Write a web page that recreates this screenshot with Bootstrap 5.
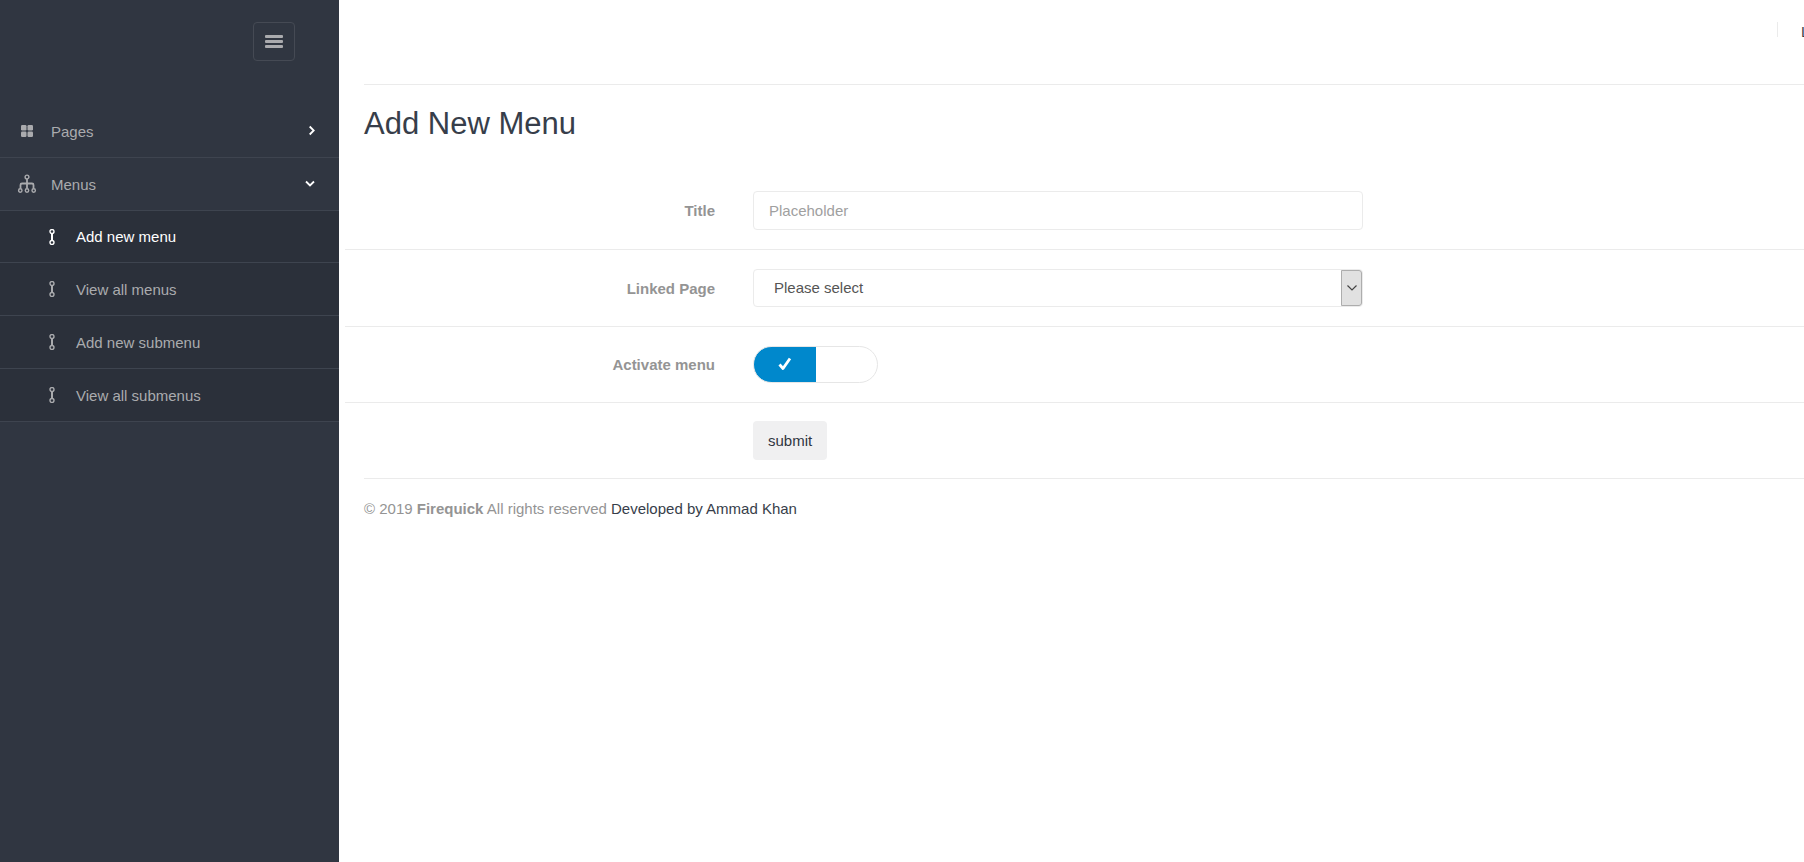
<!DOCTYPE html>
<html lang="en">
<head>
<meta charset="utf-8">
<meta name="viewport" content="width=device-width, initial-scale=1">
<title>Add New Menu</title>
<link href="https://cdn.jsdelivr.net/npm/bootstrap@5.3.0/dist/css/bootstrap.min.css" rel="stylesheet">
<style>
  body { font: 15px/21px "Liberation Sans", Arial, sans-serif; color: #949494; background: #fff; overflow-x: hidden; }
  a { color: #373e4a; text-decoration: none; }

  .side { width: 339px; background: #303641; }
  .side-head { height: 105px; padding: 22px 44px 0 0; }
  .collapse-btn { width: 42px; height: 39px; padding: 0; border: 1px solid #454a54; border-radius: 4px; background: none; color: #aaabae; line-height: 0; }
  .side ul a { height: 53px; color: #aaabae; border-bottom: 1px solid #3e444f; }
  .side ul a:hover, .side ul a.current { color: #fff; }
  .top-link { padding: 0 24px 0 17px; }
  .top-link svg:first-child { width: 20px; margin-right: 14px; }
  .arrow { color: #fff; }
  .sub { background: #2b303a; }
  .sub a { padding: 0 24px 0 46px; }
  .side .sub li:first-child a { height: 52px; }
  .sub svg { margin-right: 17px; }

  .content-area { padding-left: 25px; margin-right: -78px; }
  .page-head { height: 85px; padding: 21px 17px 0 0; border-bottom: 1px solid #ebebeb; }
  .page-head a { width: 64px; }
  .divider { width: 1px; height: 15px; margin: 1px 23px 0 0; background: #ebebeb; }
  h1 { font-size: 31px; line-height: 34px; font-weight: 400; color: #373e4a; margin: 22px 0 31px; }

  .form-line { --bs-gutter-x: 38px; padding: 19px 0; border-bottom: 1px solid #ebebeb; }
  .form-line:last-child { padding: 18px 0; border-bottom: 0; }
  .form-line label { font-weight: 700; }
  .form-control, .form-select { height: 39px; font-size: 15px; line-height: 21px; color: #555; border-color: #ebebeb; border-radius: 4px; padding: 0 15px; }
  .form-control::placeholder { color: #a0a0a0; }
  .form-select { height: 38px; padding: 0 30px 2px 20px; background-image: none; }
  .select-cap { top: 1px; right: 1px; bottom: 1px; width: 21px; background: #e1e1e1; border: 1px solid #adadad; border-radius: 0 3px 3px 0; pointer-events: none; color: #444; }
  .toggle { width: 125px; height: 37px; }
  .toggle input { appearance: none; width: 100%; height: 100%; margin: 0; border: 1px solid #e6e6e6; border-radius: 19px; background: #fff; }
  .toggle input:checked { background: linear-gradient(90deg, #0088cc 50%, #fff 50%); }
  .toggle svg { top: 11px; left: 25px; pointer-events: none; }
  .btn-submit { height: 39px; padding: 0 15px; font-size: 15px; color: #303641; background: #f0f0f1; border: 0; border-radius: 4px; }
  footer { border-top: 1px solid #ebebeb; padding: 19px 0; }
</style>
</head>
<body>
<svg class="d-none" aria-hidden="true">
  <symbol id="flow" viewBox="0 0 6 16">
    <g fill="none" stroke="currentColor" stroke-width="1.4"><circle cx="3" cy="2.5" r="2"/><circle cx="3" cy="13.5" r="2"/></g>
    <path d="M3 4.3v7.4" stroke="currentColor" stroke-width="2"/>
  </symbol>
</svg>
<div class="d-flex min-vh-100">
  <aside class="side flex-shrink-0">
    <div class="side-head d-flex justify-content-end align-items-start">
      <button class="collapse-btn" type="button" aria-label="Toggle sidebar">
        <svg width="18" height="14" viewBox="0 0 18 14" fill="currentColor"><rect y="0" width="18" height="3" rx="1"/><rect y="5" width="18" height="3" rx="1"/><rect y="10" width="18" height="3" rx="1"/></svg>
      </button>
    </div>
    <ul class="list-unstyled mb-0">
      <li>
        <a class="top-link d-flex align-items-center" href="#">
          <svg height="12" viewBox="0 0 20 12" fill="currentColor"><rect x="4" width="5.500" height="5.500" rx="1.200"/><rect x="10.500" width="5.500" height="5.500" rx="1.200"/><rect x="4" y="6.500" width="5.500" height="5.500" rx="1.200"/><rect x="10.500" y="6.500" width="5.500" height="5.500" rx="1.200"/></svg>
          <span class="flex-grow-1">Pages</span>
          <svg class="arrow" width="6" height="12" viewBox="0 0 6 12" fill="none" stroke="currentColor" stroke-width="1.800"><path d="M.7 1.500 4.700 5.500 .7 9.500"/></svg>
        </a>
      </li>
      <li>
        <a class="top-link d-flex align-items-center" href="#">
          <svg height="20" viewBox="0 0 20 20" fill="none" stroke="currentColor" stroke-width="1.400"><circle cx="10" cy="3" r="1.900"/><circle cx="3.300" cy="16.500" r="1.700"/><circle cx="10" cy="16.500" r="1.700"/><circle cx="16.700" cy="16.500" r="1.700"/><path d="M10 5v9.500M3.500 14.500v-3.500q0-1.500 1.500-1.500h10q1.500 0 1.500 1.500v3.500" stroke-width="1.800"/></svg>
          <span class="flex-grow-1">Menus</span>
          <svg class="arrow" width="10" height="8" viewBox="0 0 10 8" fill="none" stroke="currentColor" stroke-width="1.800"><path d="M1 1.500 5 5.500 9 1.500"/></svg>
        </a>
        <ul class="sub list-unstyled">
          <li><a class="current d-flex align-items-center" href="#"><svg width="13" height="16"><use href="#flow" width="12"/></svg>Add new menu</a></li>
          <li><a class="d-flex align-items-center" href="#"><svg width="13" height="16"><use href="#flow" width="12"/></svg>View all menus</a></li>
          <li><a class="d-flex align-items-center" href="#"><svg width="13" height="16"><use href="#flow" width="12"/></svg>Add new submenu</a></li>
          <li><a class="d-flex align-items-center" href="#"><svg width="13" height="16"><use href="#flow" width="12"/></svg>View all submenus</a></li>
        </ul>
      </li>
    </ul>
  </aside>

  <main class="content-area flex-grow-1">
    <div class="page-head d-flex justify-content-end">
      <span class="divider"></span>
      <a class="text-nowrap" href="#">Log Out</a>
    </div>
    <h1>Add New Menu</h1>
    <form>
      <div class="form-line row">
        <label class="col-3 text-end align-self-center" for="title">Title</label>
        <div class="col-5"><input class="form-control" id="title" type="text" placeholder="Placeholder"></div>
      </div>
      <div class="form-line row">
        <label class="col-3 text-end align-self-center" for="linked">Linked Page</label>
        <div class="col-5">
          <div class="position-relative">
            <select class="form-select" id="linked"><option>Please select</option></select>
            <span class="select-cap position-absolute d-flex align-items-center justify-content-center">
              <svg width="10" height="6" viewBox="0 0 10 6" fill="none" stroke="currentColor" stroke-width="1.200"><path d="M.5.5 5 5 9.500.5"/></svg>
            </span>
          </div>
        </div>
      </div>
      <div class="form-line row">
        <label class="col-3 text-end align-self-center" for="active">Activate menu</label>
        <div class="col-5">
          <div class="toggle position-relative d-flex">
            <input id="active" type="checkbox" role="switch" checked>
            <svg class="position-absolute" width="14" height="14" viewBox="0 0 14 14" fill="none" stroke="#fff" stroke-width="2.800"><path d="M1.500 7.500 5 11.500 12 1.500" stroke-linejoin="round"/></svg>
          </div>
        </div>
      </div>
      <div class="form-line row">
        <div class="col-5 offset-3 d-flex"><button class="btn-submit" type="submit">submit</button></div>
      </div>
    </form>
    <footer>© 2019 <strong>Firequick</strong> All rights reserved <a href="#">Developed by Ammad Khan</a></footer>
  </main>
</div>
<script src="https://cdn.jsdelivr.net/npm/bootstrap@5.3.0/dist/js/bootstrap.bundle.min.js"></script>
</body>
</html>
